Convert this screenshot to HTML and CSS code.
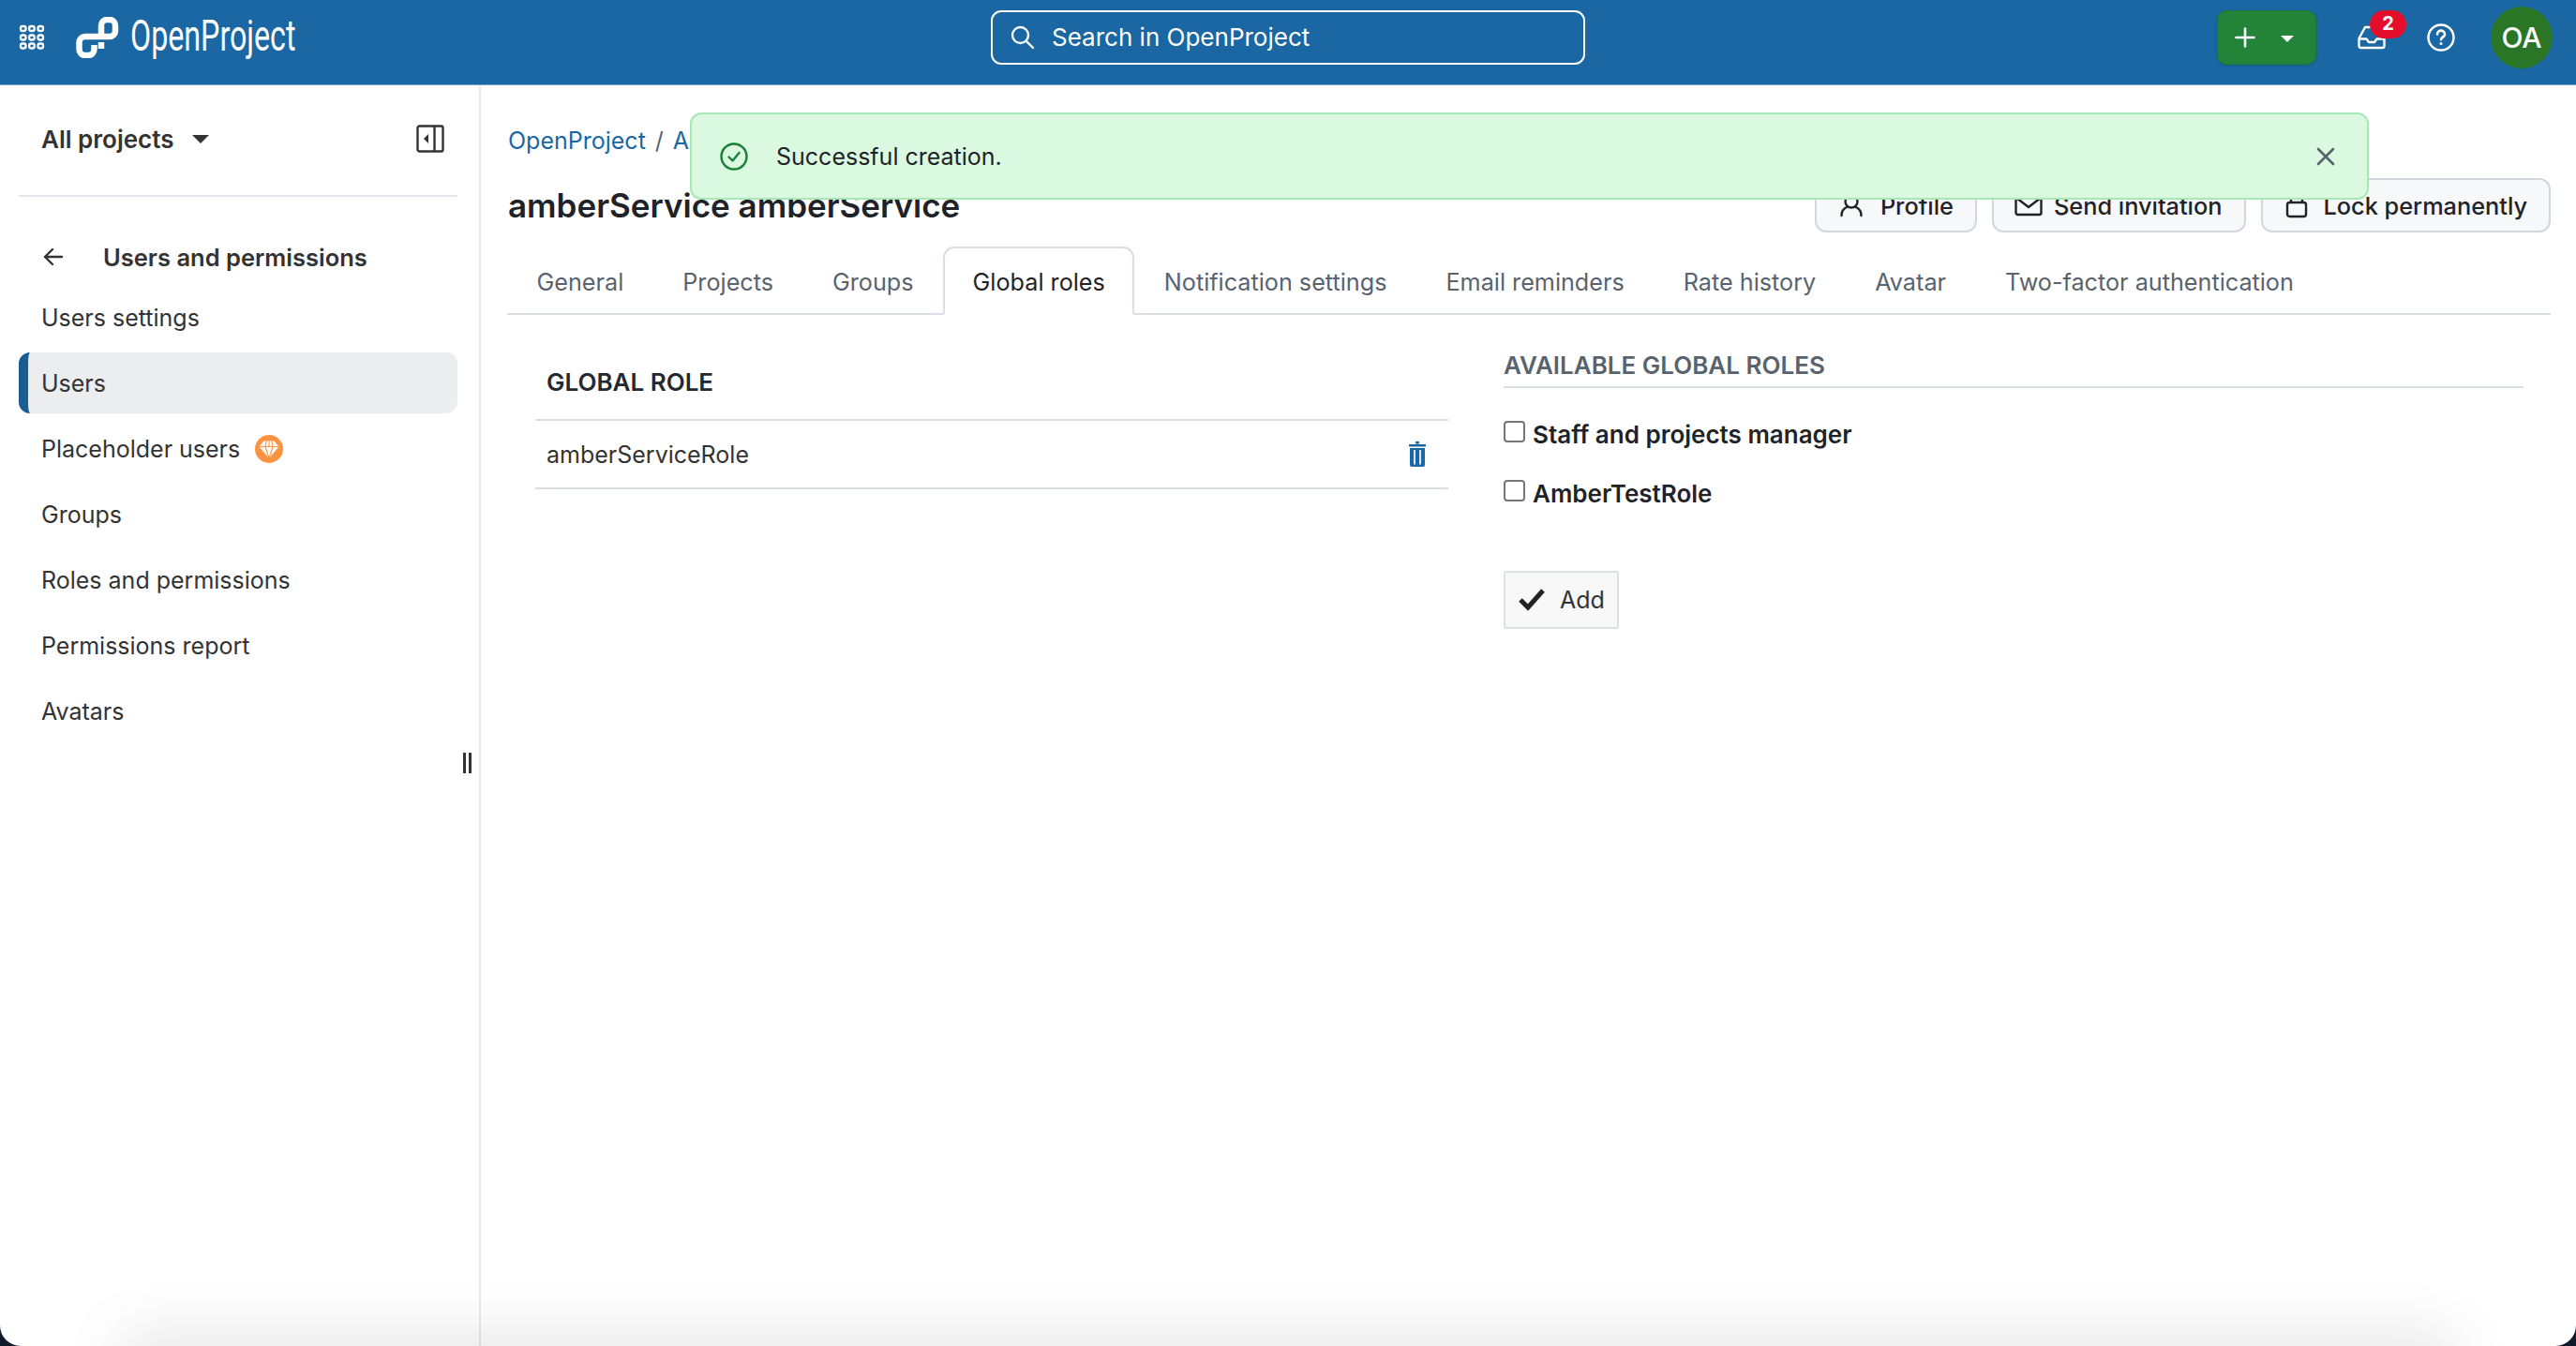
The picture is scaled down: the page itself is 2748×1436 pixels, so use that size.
FILE: index.html
```html
<!DOCTYPE html>
<html lang="en">
<head>
<meta charset="utf-8">
<title>amberService amberService</title>
<link rel="stylesheet" href="styles.css">
</head>
<body>
<header class="topbar">
  <div class="top-left">
    <svg class="grid-icon" width="28" height="28" viewBox="0 0 28 28" fill="none" stroke="#fff" stroke-width="2.300"><rect x="2" y="2" width="5.500" height="5" rx="2"/><rect x="11.200" y="2" width="5.500" height="5" rx="2"/><rect x="20.500" y="2" width="5.500" height="5" rx="2"/><rect x="2" y="11.500" width="5.500" height="5" rx="2"/><rect x="11.200" y="11.500" width="5.500" height="5" rx="2"/><rect x="20.500" y="11.500" width="5.500" height="5" rx="2"/><rect x="2" y="20.500" width="5.500" height="5" rx="2"/><rect x="11.200" y="20.500" width="5.500" height="5" rx="2"/><rect x="20.500" y="20.500" width="5.500" height="5" rx="2"/></svg>
    <svg class="logo-icon" width="46" height="44" viewBox="0 0 46 44" fill="none" stroke="#fff" stroke-width="6.500"><path d="M27 20V9a6 6 0 0 1 6-6h3a6 6 0 0 1 6 6v6a6 6 0 0 1-6 6H10a6.500 6.500 0 0 0-6.500 6.500v7a6.500 6.500 0 0 0 6.500 6.500h3a6.500 6.500 0 0 0 6.500-6.500V30"/><path d="M27 27v7"/></svg>
    <div class="logo-word"><span>OpenProject</span></div>
  </div>
  <div class="search">
    <svg width="26" height="26" viewBox="0 0 26 26" fill="none" stroke="#fff" stroke-width="2.400" stroke-linecap="round"><circle cx="10.500" cy="10.500" r="8.500"/><path d="M16.800 16.800 24 24"/></svg>
    <span>Search in OpenProject</span>
  </div>
  <div class="top-right">
    <div class="create-btn">
      <svg width="22" height="22" viewBox="0 0 22 22" fill="none" stroke="#fff" stroke-width="2.600" stroke-linecap="round"><path d="M11 1.500v19M1.500 11h19"/></svg>
      <span class="caret-white"></span>
    </div>
    <div class="inbox">
      <svg width="30" height="26" viewBox="0 0 30 26" fill="none" stroke="#fff" stroke-width="2.400" stroke-linejoin="round"><path d="M8 2h14l6.500 12v8a2 2 0 0 1-2 2h-23a2 2 0 0 1-2-2v-8Z"/><path d="M1.500 14.500H9.500l2.500 3.500h6l2.500-3.500h8"/></svg>
      <span class="badge">2</span>
    </div>
    <svg class="help" width="30" height="30" viewBox="0 0 30 30" fill="none" stroke="#fff" stroke-width="2.400" stroke-linecap="round"><circle cx="15" cy="15" r="13.500"/><path d="M11 11.500a4 4 0 0 1 8 .3c0 2.700-4 3-4 5.500" stroke-width="2.600"/><circle cx="15" cy="21.500" r=".8" stroke-width="1.600"/></svg>
    <div class="avatar">OA</div>
  </div>
</header>

<div class="body-row">
  <aside class="sidebar">
    <div class="project-row">
      <div class="project-select"><span>All projects</span><span class="caret-dark"></span></div>
      <svg width="30" height="30" viewBox="0 0 30 30" fill="none" stroke="#333" stroke-width="2.400"><rect x="1.500" y="1.500" width="27" height="27" rx="2"/><path d="M19.500 1.500v27"/><path d="M13 10v10l-5-5Z" fill="#333" stroke="none"/></svg>
    </div>
    <div class="back-row">
      <svg width="22" height="20" viewBox="0 0 22 20" fill="none" stroke="#333" stroke-width="2.400" stroke-linecap="round" stroke-linejoin="round"><path d="M10 2 2 10l8 8M2 10h18"/></svg>
      <span>Users and permissions</span>
    </div>
    <nav class="menu">
      <a class="menu-item">Users settings</a>
      <a class="menu-item active">Users</a>
      <a class="menu-item">Placeholder users
        <svg class="gem" width="30" height="30" viewBox="0 0 30 30"><circle cx="15" cy="15" r="15" fill="#fd9340"/><path d="M9.500 6.500h11l5 6L15 25 4.500 12.500Z" fill="#fff"/><path d="M4.500 12.500h21M11 12.500l4 12.500 4-12.500M12 6.500l-1 6M18 6.500l1 6M15 6.500v6" stroke="#fd9340" stroke-width="1.100" fill="none"/></svg>
      </a>
      <a class="menu-item">Groups</a>
      <a class="menu-item">Roles and permissions</a>
      <a class="menu-item">Permissions report</a>
      <a class="menu-item">Avatars</a>
    </nav>
    <div class="resize-handle"></div>
  </aside>

  <main class="content">
    <div class="breadcrumb"><a>OpenProject</a><span class="sep">/</span><a>Ad</a></div>
    <div class="title-row">
      <h1>amberService amberService</h1>
      <div class="actions">
        <a class="btn btn-profile"><svg width="26" height="26" viewBox="0 0 26 26" fill="none" stroke="#1f2328" stroke-width="2.400" stroke-linecap="round"><circle cx="13" cy="9" r="6.500"/><path d="M2.500 24c0-5.500 4-8.500 6.500-9.500M23.500 24c0-5.500-4-8.500-6.500-9.500"/></svg>Profile</a>
        <a class="btn btn-mail"><svg width="30" height="24" viewBox="0 0 30 24" fill="none" stroke="#1f2328" stroke-width="2.400" stroke-linejoin="round"><rect x="1.500" y="2" width="27" height="20" rx="2"/><path d="m2 4 13 10L28 4"/></svg>Send invitation</a>
        <a class="btn btn-lock"><svg width="24" height="28" viewBox="0 0 24 28" fill="none" stroke="#1f2328" stroke-width="2.400"><rect x="2" y="11" width="20" height="15" rx="2.500"/><path d="M6 11V7a6 6 0 0 1 12 0v4"/></svg>Lock permanently</a>
      </div>
    </div>
    <nav class="tabs">
      <a class="tab">General</a>
      <a class="tab">Projects</a>
      <a class="tab">Groups</a>
      <a class="tab selected">Global roles</a>
      <a class="tab">Notification settings</a>
      <a class="tab">Email reminders</a>
      <a class="tab">Rate history</a>
      <a class="tab">Avatar</a>
      <a class="tab">Two-factor authentication</a>
    </nav>
    <div class="columns">
      <section class="roles-table">
        <div class="table-head">GLOBAL ROLE</div>
        <div class="table-row">
          <span>amberServiceRole</span>
          <svg width="18" height="27" viewBox="0 0 18 27" fill="#1a67a3"><rect x="7" y="0" width="4" height="2.500"/><rect x="0" y="3" width="18" height="2.500"/><path d="M1 7h16v18a2 2 0 0 1-2 2H3a2 2 0 0 1-2-2Z"/><path d="M5 9h2v15.500H5ZM11 9h2v15.500h-2Z" fill="#dbe7f1"/></svg>
        </div>
      </section>
      <section class="available">
        <h2>AVAILABLE GLOBAL ROLES</h2>
        <label class="check-row first"><input type="checkbox"><span>Staff and projects manager</span></label>
        <label class="check-row"><input type="checkbox"><span>AmberTestRole</span></label>
        <button class="add-btn" type="button"><svg width="28" height="24" viewBox="0 0 28 24" fill="none" stroke="#222" stroke-width="5"><path d="m2 12 8 8L26 2"/></svg>Add</button>
      </section>
    </div>
  </main>
</div>

<div class="toast">
  <svg width="30" height="30" viewBox="0 0 30 30" fill="none" stroke="#1a7f37" stroke-width="2.400" stroke-linecap="round" stroke-linejoin="round"><circle cx="15" cy="15" r="13.500"/><path d="m9.500 15.500 4 4 7-8.500"/></svg>
  <span class="toast-text">Successful creation.</span>
  <svg width="20" height="20" viewBox="0 0 20 20" fill="none" stroke="#59636e" stroke-width="2.600" stroke-linecap="round"><path d="m2 2 16 16M18 2 2 18"/></svg>
</div>
<div class="bottom-shade"></div>
<div class="window-corners"></div>
</body>
</html>
```

FILE: styles.css
```css
* { box-sizing: border-box; }
html, body { margin: 0; height: 100%; }
body {
  position: relative;
  overflow: hidden;
  background: #fff;
  font-family: Inter, "Liberation Sans", sans-serif;
  font-size: 25px;
  color: #333;
}
a { text-decoration: none; color: inherit; }

/* top bar */
.topbar {
  display: flex;
  align-items: center;
  height: 91px;
  padding-bottom: 11px;
  background: #1a67a3;
  border-bottom: 1px solid #6f9fc6;
  color: #fff;
}
.top-left { display: flex; align-items: center; width: 1057px; padding-left: 20px; }
.grid-icon { flex: none; }
.logo-icon { flex: none; margin-left: 33px; }
.logo-word { width: 177px; margin-left: 12px; height: 60px; padding-bottom: 4px; display: flex; align-items: center; }
.logo-word span {
  display: block;
  font-family: Roboto, sans-serif;
  font-weight: 400;
  font-size: 47px;
  line-height: 56px;
  white-space: nowrap;
  transform: scaleX(.685);
  transform-origin: left center;
}
.search {
  display: flex;
  align-items: center;
  gap: 18px;
  width: 634px;
  height: 58px;
  padding-left: 19px;
  border: 2px solid #fff;
  border-radius: 11px;
  font-size: 26px;
}
.top-right { display: flex; align-items: center; flex: 1; padding-left: 674px; }
.create-btn {
  display: flex;
  align-items: center;
  width: 106px;
  height: 58px;
  padding-left: 18px;
  background: #238439;
  border: 1px solid #1f7a34;
  border-radius: 10px;
  box-shadow: 0 1px 3px rgba(0,0,0,.15);
}
.caret-white {
  width: 0; height: 0;
  margin-left: 27px;
  margin-top: 3px;
  border-left: 7px solid transparent;
  border-right: 7px solid transparent;
  border-top: 7px solid #fff;
}
.inbox { position: relative; display: flex; margin-left: 44px; }
.badge {
  position: absolute;
  left: 13px;
  top: -16px;
  width: 39px;
  height: 30px;
  background: #e40e2a;
  border-radius: 15px;
  font-size: 20px;
  font-weight: 700;
  line-height: 28px;
  text-align: center;
}
.help { flex: none; margin-left: 44px; }
.avatar {
  display: flex;
  align-items: center;
  justify-content: center;
  flex: none;
  width: 66px;
  height: 66px;
  margin-left: 38px;
  background: #2b7527;
  border-radius: 50%;
  font-size: 30px;
  font-weight: 500;
}

.body-row { display: flex; height: calc(100% - 91px); }

/* sidebar */
.sidebar {
  position: relative;
  flex: none;
  width: 513px;
  padding: 0 23px 0 20px;
  border-right: 2px solid #ebebeb;
}
.project-row {
  display: flex;
  align-items: center;
  justify-content: space-between;
  height: 119px;
  padding: 0 14px 3px 24px;
  border-bottom: 2px solid #e3e6ea;
}
.project-select { display: flex; align-items: center; gap: 20px; font-size: 26px; font-weight: 600; }
.caret-dark {
  width: 0; height: 0;
  border-left: 9px solid transparent;
  border-right: 9px solid transparent;
  border-top: 9px solid #333;
}
.back-row {
  display: flex;
  align-items: center;
  gap: 42px;
  height: 64px;
  margin-top: 32px;
  padding-left: 26px;
  font-size: 25.500px;
  font-weight: 600;
}
.menu { display: flex; flex-direction: column; gap: 5px; margin-top: 0; }
.menu-item {
  display: flex;
  align-items: center;
  gap: 16px;
  height: 65px;
  padding-left: 24px;
  border-radius: 12px;
}
.menu-item.active {
  background: #ecedee;
  border-left: 10px solid #1a5d93;
  padding-left: 14px;
}
.gem { flex: none; }
.resize-handle {
  position: absolute;
  left: 494px;
  top: 712px;
  width: 9px;
  height: 22px;
  border-left: 3px solid #333;
  border-right: 3px solid #333;
}

/* main */
.content { flex: 1; min-width: 0; padding: 0 27px 0 28px; }
.breadcrumb {
  display: flex;
  gap: 10px;
  height: 36px;
  margin-top: 41px;
  margin-left: 1px;
  line-height: 36px;
  color: #1a67a3;
  white-space: nowrap;
}
.sep { color: #59636e; }
.title-row {
  display: flex;
  align-items: center;
  justify-content: space-between;
  height: 58px;
  margin-top: 22px;
}
h1 { margin: 0 0 0 1px; font-size: 35px; font-weight: 600; color: #1f2328; }
.actions { display: flex; gap: 16px; }
.btn {
  display: flex;
  align-items: center;
  gap: 16px;
  height: 58px;
  padding: 0 24px;
  background: #f6f8fa;
  border: 2px solid #d0d7de;
  border-radius: 12px;
  font-size: 25.300px;
  font-weight: 500;
  color: #1f2328;
}
.btn-profile { gap: 18px; padding-right: 23px; }
.btn-mail { gap: 12px; padding-left: 22px; }
.btn-lock { padding-right: 23px; }
.tabs {
  display: flex;
  height: 73px;
  margin-top: 15px;
  border-bottom: 2px solid #d8dee4;
}
.tab {
  display: flex;
  align-items: center;
  height: 73px;
  padding: 2px 29.500px 0;
  font-size: 25.200px;
  color: #59636e;
  border: 2px solid transparent;
}
.tab.selected {
  background: #fff;
  border-color: #d8dee4;
  border-bottom-color: #fff;
  border-radius: 12px 12px 0 0;
  color: #1f2328;
}
.columns {
  display: grid;
  grid-template-columns: 974px 1fr;
  gap: 59px;
  padding: 0 29px 0 30px;
}
.roles-table { margin-top: 44px; }
.table-head {
  height: 69px;
  padding: 0 12px;
  font-size: 26px;
  line-height: 56px;
  font-weight: 600;
  color: #24292f;
  border-bottom: 2px solid #d8dee4;
}
.table-row {
  display: flex;
  align-items: center;
  justify-content: space-between;
  height: 73px;
  padding: 0 24px 0 12px;
  border-bottom: 2px solid #d8dee4;
}
.available h2 {
  margin: 36px 0 0;
  padding-bottom: 4px;
  font-size: 26px;
  font-weight: 600;
  line-height: 36px;
  color: #59636e;
  border-bottom: 2px solid #d8dee4;
}
.check-row {
  display: flex;
  align-items: flex-start;
  gap: 8px;
  height: 36px;
  margin-top: 27px;
  font-size: 26px;
  font-weight: 600;
  line-height: 36px;
  color: #1f2328;
}
.check-row.first { margin-top: 32px; }
.check-row input {
  appearance: none;
  flex: none;
  width: 23px;
  height: 23px;
  margin: 3px 0 0;
  background: #fff;
  border: 2px solid #767676;
  border-radius: 4px;
}
.add-btn {
  display: flex;
  align-items: center;
  gap: 16px;
  height: 62px;
  margin-top: 64px;
  padding: 0 13px 0 14px;
  background: #f8f8f8;
  border: 2px solid #dde1e6;
  border-radius: 3px;
  font: inherit;
  color: #333;
}

/* overlays */
.toast {
  position: absolute;
  left: 736px;
  top: 120px;
  display: flex;
  align-items: center;
  width: 1791px;
  height: 93px;
  padding: 0 34px 0 30px;
  background: #dbf9e0;
  border: 2px solid #a8e8b4;
  border-radius: 12px;
  color: #1f2328;
}
.toast-text { flex: 1; margin-left: 30px; }
.bottom-shade {
  position: absolute;
  left: 130px;
  right: 130px;
  bottom: -30px;
  height: 30px;
  box-shadow: 0 0 70px 0 rgba(0,0,0,.2);
  pointer-events: none;
}
.window-corners {
  position: absolute;
  inset: 0;
  border-radius: 0 0 22px 22px;
  box-shadow: 0 0 0 30px #0f1a2a;
  pointer-events: none;
}
```
